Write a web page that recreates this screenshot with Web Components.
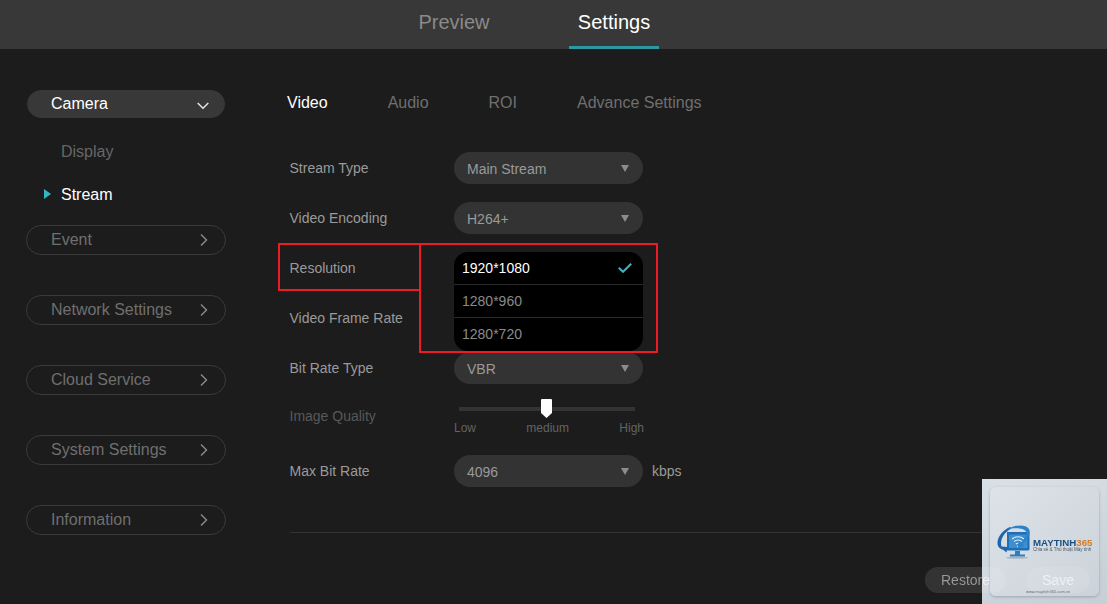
<!DOCTYPE html>
<html>
<head>
<meta charset="utf-8">
<title>Settings</title>
<style>
  html, body { margin: 0; height: 100%; background: #1c1c1c; overflow: hidden; }
  body { font-family: "Liberation Sans", Arial, sans-serif; }
</style>
</head>
<body>
<cam-app>
  <cam-header slot="header"></cam-header>
  <cam-sidebar slot="sidebar"></cam-sidebar>
  <cam-stream-form slot="main"></cam-stream-form>
</cam-app>
<cam-watermark></cam-watermark>

<script>
const chevronRight = `<svg width="8" height="12" viewBox="0 0 8 12"><path d="M1 .5 6.500 6 1 11.500" fill="none" stroke="currentColor" stroke-width="1.400"/></svg>`;
const chevronDown = `<svg width="12" height="8" viewBox="0 0 12 8"><path d="M.7 1 6 6.300 11.300 1" fill="none" stroke="currentColor" stroke-width="1.500"/></svg>`;

class CamApp extends HTMLElement {
  connectedCallback() {
    this.attachShadow({ mode: "open" }).innerHTML = `
      <style>
        :host { display: flex; flex-direction: column; width: 1107px; height: 604px; color: #fff; }
        .body { display: flex; flex: 1; min-height: 0; }
      </style>
      <slot name="header"></slot>
      <div class="body">
        <slot name="sidebar"></slot>
        <slot name="main"></slot>
      </div>`;
  }
}

class CamHeader extends HTMLElement {
  connectedCallback() {
    this.attachShadow({ mode: "open" }).innerHTML = `
      <style>
        :host { display: flex; justify-content: center; height: 49px; background: #383838; font-size: 20px; padding-right: 39px; box-sizing: border-box; }
        a { display: flex; align-items: center; justify-content: center; box-sizing: border-box; height: 49px; width: 90px; padding-bottom: 1px; color: #8a8a8a; border-bottom: 3px solid transparent; }
        a + a { margin-left: 70px; }
        a.on { color: #fff; border-bottom-color: #2a98a5; }
      </style>
      <a>Preview</a>
      <a class="on">Settings</a>`;
  }
}

class CamNavPill extends HTMLElement {
  connectedCallback() {
    const open = this.hasAttribute("open");
    this.attachShadow({ mode: "open" }).innerHTML = `
      <style>
        :host { display: flex; align-items: center; justify-content: space-between; box-sizing: border-box; width: 200px; height: 30px; border-radius: 15px; border: 1px solid #3a3a3a; padding: 0 17px 0 24px; font-size: 16px; color: #6f6f6f; }
        :host([open]) { background: #383838; border-color: #383838; color: #fff; width: 198px; height: 28px; margin-left: 1px; padding: 0 15px 0 23px; }
        span { display: flex; color: #8c8c8c; }
        :host([open]) span { color: #e6e6e6; padding-top: 3px; }
      </style>
      <slot></slot><span>${open ? chevronDown : chevronRight}</span>`;
  }
}

class CamSidebar extends HTMLElement {
  connectedCallback() {
    this.attachShadow({ mode: "open" }).innerHTML = `
      <style>
        :host { display: flex; flex-direction: column; flex: none; width: 290px; box-sizing: border-box; padding: 41px 0 0 26px; }
        .sub { display: flex; align-items: center; height: 20px; padding-left: 35px; font-size: 16px; color: #666; position: relative; }
        .sub.first { margin-top: 24px; }
        .sub.on { color: #fff; margin-top: 23px; }
        .sub.on::before { content: ""; position: absolute; left: 18px; top: 4px; border-left: 7px solid #35b5c2; border-top: 5px solid transparent; border-bottom: 5px solid transparent; }
        cam-nav-pill { margin-bottom: 40px; }
        .camera { margin-bottom: 0; }
        .event { margin-top: 20px; }
      </style>
      <cam-nav-pill class="camera" open>Camera</cam-nav-pill>
      <div class="sub first">Display</div>
      <div class="sub on">Stream</div>
      <cam-nav-pill class="event">Event</cam-nav-pill>
      <cam-nav-pill>Network Settings</cam-nav-pill>
      <cam-nav-pill>Cloud Service</cam-nav-pill>
      <cam-nav-pill>System Settings</cam-nav-pill>
      <cam-nav-pill>Information</cam-nav-pill>`;
  }
}

class CamSelect extends HTMLElement {
  connectedCallback() {
    this.attachShadow({ mode: "open" }).innerHTML = `
      <style>
        :host { display: flex; align-items: center; justify-content: space-between; box-sizing: border-box; width: 189px; height: 32px; border-radius: 16px; background: #333; color: #9a9a9a; font-size: 14px; padding: 1px 14px 0 13px; }
        i { width: 0; height: 0; border-top: 7px solid #8c8c8c; border-left: 4.500px solid transparent; border-right: 4.500px solid transparent; margin-left: auto; }
      </style>
      <slot></slot><i></i>`;
  }
}

class CamRow extends HTMLElement {
  connectedCallback() {
    this.attachShadow({ mode: "open" }).innerHTML = `
      <style>
        :host { display: flex; align-items: center; height: 32px; margin-bottom: 18px; font-size: 14px; color: #9a9a9a; }
        :host([dim]) { color: #585858; }
        .label { width: 164.500px; margin-left: -.5px; flex: none; }
      </style>
      <div class="label">${this.getAttribute("label")}</div>
      <slot></slot>`;
  }
}

class CamDropdown extends HTMLElement {
  connectedCallback() {
    const items = this.getAttribute("items").split(",");
    this.attachShadow({ mode: "open" }).innerHTML = `
      <style>
        :host { position: absolute; left: 454px; top: 252px; width: 189px; height: 99px; box-sizing: border-box; background: #000; border-radius: 14px; overflow: hidden; font-size: 14px; color: #8a8a8a; }
        div { display: flex; align-items: center; justify-content: space-between; height: 33px; box-sizing: border-box; padding: 0 11px 0 8px; border-bottom: 1px solid #2a2a2a; }
        div:last-child { border-bottom: 0; padding-bottom: 1px; }
        div.on { color: #fff; }
      </style>
      ${items.map((t, i) => `<div class="${i ? "" : "on"}">${t}${i ? "" : `<svg width="14" height="10" viewBox="0 0 14 10"><path d="M.8 4.800 5 8.800 13.200 .7" fill="none" stroke="#3fb4c0" stroke-width="2"/></svg>`}</div>`).join("")}`;
  }
}

class CamSlider extends HTMLElement {
  connectedCallback() {
    this.attachShadow({ mode: "open" }).innerHTML = `
      <style>
        :host { display: block; align-self: flex-start; width: 190px; padding-top: 7px; font-size: 12px; color: #636363; }
        .track { position: relative; height: 4px; margin: 0 9px 0 5px; background: #333; }
        .thumb { position: absolute; left: 82px; top: -8px; }
        .labels { display: flex; justify-content: space-between; margin-top: 10px; width: 190px; }
      </style>
      <div class="track"><svg class="thumb" width="11" height="19" viewBox="0 0 11 19"><path d="M1 0H10a1 1 0 0 1 1 1V14L5.500 19 0 14V1a1 1 0 0 1 1-1Z" fill="#fff"/></svg></div>
      <div class="labels"><span>Low</span><span>medium</span><span>High</span></div>`;
  }
}

class CamButton extends HTMLElement {
  connectedCallback() {
    this.attachShadow({ mode: "open" }).innerHTML = `
      <style>
        :host { display: flex; align-items: center; justify-content: center; box-sizing: border-box; height: 26px; border-radius: 13px; background: #333; font-size: 14px; color: #9a9a9a; }
      </style>
      <slot></slot>`;
  }
}

class CamStreamForm extends HTMLElement {
  connectedCallback() {
    this.attachShadow({ mode: "open" }).innerHTML = `
      <style>
        :host { display: flex; flex-direction: column; flex: 1; min-width: 0; }
        nav { display: flex; height: 20px; margin: 44px 0 39px -3px; font-size: 16px; color: #6f6f6f; align-items: center; }
        nav a { margin-right: 60px; }
        nav a.on { color: #fff; }
        .form { display: flex; flex-direction: column; }
        .quality { margin: -2px 0 23px; }
        .kbps { margin-left: 9px; }
        hr { border: 0; border-top: 1px solid #333; margin: 45px 0 0; }
        .actions { display: flex; justify-content: flex-end; gap: 20px; margin-top: 34px; padding-right: 17px; }
        /* the watermark sits between these two and the page */
        .restore, .save { position: relative; z-index: 2; }
        .restore { width: 81px; background: linear-gradient(90deg, #333 57px, rgba(255,255,255,.1) 57px); }
        .restore span { color: transparent; background: linear-gradient(90deg, #9a9a9a 42px, #eef1f4 42px); -webkit-background-clip: text; background-clip: text; }
        .save { width: 64px; color: #eef1f4; background: rgba(255,255,255,.1); }
        .mark { position: absolute; box-sizing: border-box; border: 2px solid #ed1c24; pointer-events: none; }
      </style>
      <nav><a class="on">Video</a><a>Audio</a><a>ROI</a><a>Advance Settings</a></nav>
      <div class="form">
        <cam-row label="Stream Type"><cam-select>Main Stream</cam-select></cam-row>
        <cam-row label="Video Encoding"><cam-select>H264+</cam-select></cam-row>
        <cam-row label="Resolution"><cam-select></cam-select></cam-row>
        <cam-row label="Video Frame Rate"><cam-select></cam-select></cam-row>
        <cam-row label="Bit Rate Type"><cam-select>VBR</cam-select></cam-row>
        <cam-row class="quality" label="Image Quality" dim><cam-slider></cam-slider></cam-row>
        <cam-row label="Max Bit Rate" style="margin-bottom:0"><cam-select>4096</cam-select><span class="kbps">kbps</span></cam-row>
      </div>
      <hr>
      <div class="actions">
        <cam-button class="restore"><span>Restore</span></cam-button>
        <cam-button class="save">Save</cam-button>
      </div>
      <cam-dropdown items="1920*1080,1280*960,1280*720"></cam-dropdown>
      <div class="mark" style="left:278px;top:243px;width:143px;height:48px"></div>
      <div class="mark" style="left:419px;top:243px;width:239px;height:110px"></div>`;
  }
}

class CamWatermark extends HTMLElement {
  connectedCallback() {
    this.attachShadow({ mode: "open" }).innerHTML = `
      <style>
        :host { position: absolute; z-index: 1; left: 982px; top: 479px; width: 125px; height: 125px; background: linear-gradient(160deg, #d9e0e6, #c6ced6); overflow: hidden; font-family: "Liberation Sans", Arial, sans-serif; }
        .card { position: absolute; left: 8px; top: 8px; width: 109px; height: 109px; border-radius: 6px; background: linear-gradient(135deg, #dde3e8, #cbd2d9); box-shadow: 0 1px 3px rgba(90,100,110,.4); }
        svg, .name, .tag, .url { filter: blur(.3px); }
        svg { position: absolute; left: 7px; top: 38px; }
        .name { position: absolute; left: 43px; top: 50px; font-size: 9.700px; line-height: 11px; font-weight: 700; color: #1c4f80; white-space: nowrap; }
        .name b { color: #d27a28; }
        .tag { position: absolute; left: 43px; top: 60px; font-size: 4.500px; line-height: 6px; color: #49596a; white-space: nowrap; }
        .url { position: absolute; left: 36px; top: 102px; font-size: 4px; line-height: 5px; color: #59636e; white-space: nowrap; }
      </style>
      <div class="card">
        <svg width="34" height="34" viewBox="0 0 34 34">
          <path d="M10 7H31a1.500 1.500 0 0 1 1.500 1.500V24a1.500 1.500 0 0 1-1.500 1.500H10Z" fill="#1f6fb5"/>
          <path d="M12 9.500H30.500V23H12Z" fill="#3f8fd0"/>
          <path d="M18 26h5v3.500h5V31.500H13V29.500h5Z" fill="#2a7fc4"/>
          <path d="M15 14q6-4.500 12 0M17 16.500q4-3 8 0M19 19q2-1.500 4 0" fill="none" stroke="#e2f0f8" stroke-width="1.100"/>
          <circle cx="21" cy="21.500" r="1" fill="#e2f0f8"/>
          <path d="M13 2C6 5 0 12 .5 19c.3 3 2.500 5 6 6l3 2.500 1-5.500-6-.5C2.500 15 7 7 14.500 3.500Z" fill="#1c66ad"/>
          <path d="M10 4.500C17-.5 29-1 32 4c2.500 4.500-1.500 11-6.500 15l2 2-7 2.500 1-7 2 1.500c4-3.500 7-8.500 5.500-11.500C26.500 2.500 17 2.500 10 4.500Z" fill="#2b84c9"/>
          <ellipse cx="20" cy="32.800" rx="11" ry="1" fill="#8d98a2" opacity=".6"/>
        </svg>
        <div class="name">MAYTINH<b>365</b></div>
        <div class="tag">Chia sẻ &amp; Thủ thuật Máy tính</div>
        <div class="url">www.maytinh365.com.vn</div>
      </div>`;
  }
}

customElements.define("cam-app", CamApp);
customElements.define("cam-header", CamHeader);
customElements.define("cam-nav-pill", CamNavPill);
customElements.define("cam-sidebar", CamSidebar);
customElements.define("cam-select", CamSelect);
customElements.define("cam-row", CamRow);
customElements.define("cam-dropdown", CamDropdown);
customElements.define("cam-slider", CamSlider);
customElements.define("cam-button", CamButton);
customElements.define("cam-stream-form", CamStreamForm);
customElements.define("cam-watermark", CamWatermark);
</script>
</body>
</html>
